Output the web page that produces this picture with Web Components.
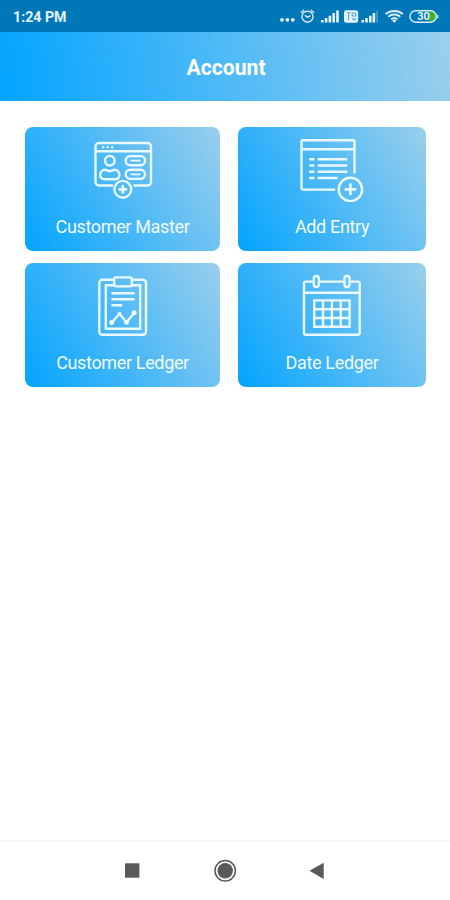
<!DOCTYPE html>
<html lang="en">
<head>
<meta charset="utf-8">
<meta name="viewport" content="width=device-width, initial-scale=1">
<title>Account</title>
<style>
  html, body {
    height: 100%;
  }
  body {
    margin: 0;
    background: #fff;
    font-family: Roboto, "Liberation Sans", sans-serif;
  }
</style>
</head>
<body>
<account-app></account-app>

<script>
class BaseElement extends HTMLElement {
  constructor() {
    super();
    this._root = this.attachShadow({ mode: 'open' });
  }

  connectedCallback() {
    this._root.innerHTML = `<style>${this.getStyle()}</style>${this.getMarkup()}`;
  }
}

class StatusBar extends BaseElement {
  getStyle() {
    return `
      :host {
        display: flex;
        align-items: center;
        justify-content: space-between;
        box-sizing: border-box;
        height: 32px;
        padding: 0 11px 0 13px;
        background: #0077b6;
        color: #e4f3fb;
      }
      time { padding-top: 2px; font-size: 14.2px; font-weight: 700; }
      svg { display: block; }
    `;
  }

  getMarkup() {
    return `
      <time>1:24 PM</time>
      <svg width="160" height="16" viewBox="279 8 160 16" fill="none" stroke="#d9eefa" stroke-width="1.4">
        <g fill="#e4f3fb" stroke="none">
          <circle cx="282" cy="19.8" r="1.9"/><circle cx="287.4" cy="19.8" r="1.9"/><circle cx="292.8" cy="19.8" r="1.9"/>
          <path d="M321 20h2.6v2.6H321zM324.8 18h2.6v4.6h-2.6zM328.6 15.8h2.6v6.8h-2.6zM332.4 13h2.6v9.6h-2.6zM336.2 10.4h2.6v12.2h-2.6z"/>
          <path d="M361.4 20h2.6v2.6h-2.6zM365.2 18h2.6v4.6h-2.6zM369 15.8h2.6v6.8H369zM372.6 13h2.6v9.6h-2.6z"/>
          <path d="M376.4 10.4h1.4v12.2h-1.4z" opacity=".4"/>
          <rect x="344" y="10.2" width="14.2" height="12.6" rx="2.4"/>
        </g>
        <circle cx="307.5" cy="16.7" r="5.5"/>
        <path d="M304.8 15.2l2.7 2.2 2.8-1.8M300.8 12.7l3.3-2.7M314.2 12.7l-3.3-2.7"/>
        <path d="M346.6 12.8h4M348.6 12.8v7.4M352.2 13h3.6v3h-3.6zM352.2 18.2l1.8 2 2-2" stroke="#5aa8d4" stroke-width="1.1"/>
        <path d="M385.6 14.1c5-4.3 12.4-4.3 17.4 0M388.3 16.7c3.5-3 8.5-3 12 0M391 19.3c2-1.6 4.6-1.6 6.6 0" stroke-width="2"/>
        <path d="M394.3 23l-2.3-2.7c1.4-1 3.2-1 4.6 0z" fill="#d9eefa" stroke="none"/>
        <path d="M429 11.8h3.3a4.7 4.7 0 0 1 0 9.4H429z" fill="#38b435" stroke="none"/>
        <rect x="410" y="10.8" width="26.2" height="11.4" rx="5.5"/>
        <path d="M437.8 14.8v3.4" stroke-width="1.2"/>
        <text x="423.6" y="20.4" text-anchor="middle" font-size="11" font-weight="700" fill="#e4f3fb" stroke="none">30</text>
      </svg>
    `;
  }
}
customElements.define('status-bar', StatusBar);

class TitleBar extends BaseElement {
  getStyle() {
    return `
      :host {
        display: flex;
        align-items: center;
        justify-content: center;
        box-sizing: border-box;
        height: 69px;
        padding: 3px 0 0 2px;
        background: linear-gradient(80deg, #03a4ff, #9acfec);
        color: #fff;
      }
      h1 { margin: 0; font-size: 21.2px; font-weight: 700; line-height: 26px; }
    `;
  }

  getMarkup() {
    return `<h1><slot></slot></h1>`;
  }
}
customElements.define('title-bar', TitleBar);

class MenuCard extends BaseElement {
  getStyle() {
    return `
      :host {
        display: flex;
        flex-direction: column;
        align-items: center;
        box-sizing: border-box;
        padding-top: 5px;
        border-radius: 8px;
        background: linear-gradient(60deg, #03a4ff, #9acfec);
        color: #f2faff;
      }
      .label { margin-top: 14px; font-size: 18px; line-height: 22px; letter-spacing: -.35px; white-space: nowrap; }
      ::slotted(svg) { display: block; }
    `;
  }

  getMarkup() {
    return `
      <slot name="icon"></slot>
      <span class="label"><slot></slot></span>
    `;
  }
}
customElements.define('menu-card', MenuCard);

class NavBar extends BaseElement {
  getStyle() {
    return `
      :host {
        display: flex;
        align-items: center;
        justify-content: center;
        box-sizing: border-box;
        height: 60px;
        border-top: 2px solid #f7f7f7;
        background: #fff;
      }
      svg { display: block; }
    `;
  }

  getMarkup() {
    return `
      <svg width="250" height="30" viewBox="100 856 250 30" fill="#595959">
        <rect x="125" y="863.3" width="14.4" height="14.4"/>
        <circle cx="225.2" cy="870.8" r="7.7"/>
        <circle cx="225.2" cy="870.8" r="10.2" fill="none" stroke="#595959" stroke-width="1.5"/>
        <path d="M323.7 862.7v16.2l-14.2-8.1z"/>
      </svg>
    `;
  }
}
customElements.define('nav-bar', NavBar);

class AccountApp extends BaseElement {
  getStyle() {
    return `
      :host {
        display: flex;
        flex-direction: column;
        height: 100vh;
      }
      main {
        flex: 1;
        display: grid;
        grid-template-columns: 195px 188px;
        grid-auto-rows: 124px;
        gap: 12px 18px;
        padding: 26px 24px 0 25px;
      }
      svg {
        fill: none;
        stroke: #e9f9ff;
        stroke-width: 2.4;
      }
      .solid { fill: #e9f9ff; stroke: none; }
    `;
  }

  getMarkup() {
    return `
      <status-bar></status-bar>
      <title-bar>Account</title-bar>
      <main>
        <menu-card>
          <svg slot="icon" width="70" height="70" viewBox="0 0 70 70">
            <path d="M25 53.5H11a3.5 3.5 0 0 1-3.5-3.5V14.5A3.5 3.5 0 0 1 11 11h48.5a3.5 3.5 0 0 1 3.5 3.5V50a3.5 3.5 0 0 1-3.5 3.5h-14M7.5 19.2H63"/>
            <g class="solid"><circle cx="15.2" cy="15.3" r="1.2"/><circle cx="19.7" cy="15.3" r="1.2"/><circle cx="24.2" cy="15.3" r="1.2"/></g>
            <circle cx="21.8" cy="28.7" r="4.8"/>
            <path d="M17 37.8c1.6 0 2.8 1.4 4.8 1.4s3.2-1.4 4.8-1.4c2.8 0 4.8 2.2 4.8 5.2 0 2.9-1.6 4.2-4.2 4.2H16.4c-2.6 0-4.2-1.3-4.2-4.2 0-3 2-5.2 4.8-5.2z"/>
            <rect x="37.7" y="24.1" width="19.4" height="9.2" rx="4.6"/>
            <rect x="37.7" y="37.7" width="19.4" height="9.2" rx="4.6"/>
            <path d="M42.6 28.7h9.8M42.6 42.3h9.8" stroke-width="1.7"/>
            <circle cx="34.8" cy="57.3" r="8.4"/>
            <path d="M34.8 53v8.6M30.5 57.3h8.6" stroke-width="2.8"/>
          </svg>
          Customer Master
        </menu-card>
        <menu-card>
          <svg slot="icon" width="70" height="70" viewBox="0 0 70 70">
            <path d="M38.2 57.6H6a1.5 1.5 0 0 1-1.5-1.5V9.7A1.5 1.5 0 0 1 6 8.2h50a1.5 1.5 0 0 1 1.5 1.5V41.5M4.5 17.2h53"/>
            <path d="M12.2 27.2h5.2M12.2 33.5h5.2M12.2 39.8h5.2M12.2 46h5.2M20.7 27.2h29.6M20.7 33.5h29.6M20.7 39.8h29.6M20.7 46h20" stroke-width="2.6"/>
            <circle cx="53.4" cy="57.4" r="11.7"/>
            <path d="M53.4 51.6v11.6M47.6 57.4h11.6" stroke-width="2.6"/>
          </svg>
          Add Entry
        </menu-card>
        <menu-card>
          <svg slot="icon" width="70" height="70" viewBox="0 0 70 70">
            <path d="M26.2 11.7H14.3a3 3 0 0 0-3 3v49.1a3 3 0 0 0 3 3H55a3 3 0 0 0 3-3V14.7a3 3 0 0 0-3-3H43.8"/>
            <path d="M26.2 17.3h-8.4v43.5h34.4V17.3h-8.4"/>
            <rect x="26.2" y="9.4" width="17.6" height="9" rx="1.8"/>
            <path d="M23.5 25.3h23M23.5 31.3h23M23.5 37.3h10.7"/>
            <path d="M23.7 54.6l7.8-8.8 7 8.6 7.7-9.6"/>
            <g class="solid"><circle cx="23.7" cy="54.6" r="2.5"/><circle cx="31.5" cy="45.8" r="2"/><circle cx="38.5" cy="54.4" r="2.4"/><circle cx="46.2" cy="44.8" r="2.5"/></g>
          </svg>
          Customer Ledger
        </menu-card>
        <menu-card>
          <svg slot="icon" width="70" height="70" viewBox="0 0 70 70">
            <path d="M16.8 13.6H9a2 2 0 0 0-2 2v49.2a2 2 0 0 0 2 2h51.7a2 2 0 0 0 2-2V15.6a2 2 0 0 0-2-2h-8.2M21.8 13.6h25.7M7 24.8h55.7"/>
            <rect x="16.8" y="8" width="5" height="11" rx="2.5"/>
            <rect x="47.5" y="8" width="5" height="11" rx="2.5"/>
            <path d="M17.2 32.4h35.4v26.4H17.2zM26 32.4v26.4M34.9 32.4v26.4M43.7 32.4v26.4M17.2 41.2h35.4M17.2 50h35.4"/>
          </svg>
          Date Ledger
        </menu-card>
      </main>
      <nav-bar></nav-bar>
    `;
  }
}
customElements.define('account-app', AccountApp);
</script>
</body>
</html>
